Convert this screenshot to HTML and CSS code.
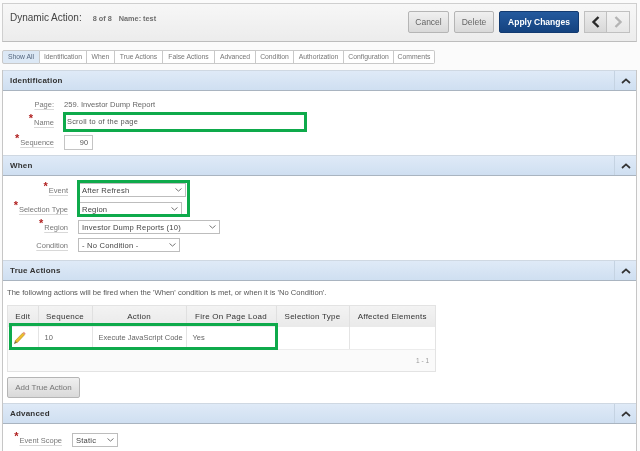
FILE: index.html
```html
<!DOCTYPE html>
<html lang="en">
<head>
<meta charset="utf-8">
<title>Dynamic Action</title>
<link rel="stylesheet" href="styles.css">
</head>
<body>
<div class="page">
  <header class="topbar">
    <div class="heading">
      <span class="title">Dynamic Action:</span>
      <span class="meta">8 of 8</span>
      <span class="meta">Name: test</span>
    </div>
    <div class="actions">
      <button class="btn">Cancel</button>
      <button class="btn btn-delete">Delete</button>
      <button class="btn btn-primary">Apply Changes</button>
      <div class="pager">
        <button class="pager-btn" aria-label="Previous"><svg width="10" height="12" viewBox="0 0 10 12"><path d="M7.500 1 2.500 6l5 5" fill="none" stroke="#2a2a2a" stroke-width="2.400"/></svg></button>
        <button class="pager-btn pager-next" aria-label="Next"><svg width="10" height="12" viewBox="0 0 10 12"><path d="M2.500 1l5 5-5 5" fill="none" stroke="#b4b4b4" stroke-width="2.400"/></svg></button>
      </div>
    </div>
  </header>

  <nav class="tabs">
    <span class="tab tab-active tw1">Show All</span>
    <span class="tab tw2">Identification</span>
    <span class="tab tw3">When</span>
    <span class="tab tw4">True Actions</span>
    <span class="tab tw5">False Actions</span>
    <span class="tab tw6">Advanced</span>
    <span class="tab tw7">Condition</span>
    <span class="tab tw8">Authorization</span>
    <span class="tab tw9">Configuration</span>
    <span class="tab tw10">Comments</span>
  </nav>

  <section class="panel">
    <div class="panel-head"><h2>Identification</h2><span class="collapse"><svg width="10" height="6" viewBox="0 0 10 6"><path d="M1 5l4-3.600L9 5" fill="none" stroke="#333" stroke-width="1.700"/></svg></span></div>
    <div class="form form-id">
      <div class="row row-page"><span class="label">Page:</span><span class="value">259. Investor Dump Report</span></div>
      <div class="row row-name"><span class="label req">Name</span><span class="field field-name">Scroll to of the page</span></div>
      <div class="row row-seq"><span class="label req">Sequence</span><span class="field field-seq">90</span></div>
    </div>
  </section>

  <section class="panel panel-when">
    <div class="panel-head"><h2>When</h2><span class="collapse"><svg width="10" height="6" viewBox="0 0 10 6"><path d="M1 5l4-3.600L9 5" fill="none" stroke="#333" stroke-width="1.700"/></svg></span></div>
    <div class="form form-when">
      <div class="highlight hl-when"></div>
      <div class="row row-sel"><span class="label req">Event</span><span class="select sel-event">After Refresh<svg class="chev" width="7" height="4" viewBox="0 0 7 4"><path d="M.5.5l3 2.600 3-2.600" fill="none" stroke="#777"/></svg></span></div>
      <div class="row row-sel"><span class="label req">Selection Type</span><span class="select sel-type">Region<svg class="chev" width="7" height="4" viewBox="0 0 7 4"><path d="M.5.5l3 2.600 3-2.600" fill="none" stroke="#777"/></svg></span></div>
      <div class="row row-sel"><span class="label req">Region</span><span class="select sel-region">Investor Dump Reports (10)<svg class="chev" width="7" height="4" viewBox="0 0 7 4"><path d="M.5.5l3 2.600 3-2.600" fill="none" stroke="#777"/></svg></span></div>
      <div class="row row-sel"><span class="label">Condition</span><span class="select sel-cond">- No Condition -<svg class="chev" width="7" height="4" viewBox="0 0 7 4"><path d="M.5.5l3 2.600 3-2.600" fill="none" stroke="#777"/></svg></span></div>
    </div>
  </section>

  <section class="panel panel-true">
    <div class="panel-head"><h2>True Actions</h2><span class="collapse"><svg width="10" height="6" viewBox="0 0 10 6"><path d="M1 5l4-3.600L9 5" fill="none" stroke="#333" stroke-width="1.700"/></svg></span></div>
    <div class="true-body">
      <p class="note">The following actions will be fired when the 'When' condition is met, or when it is 'No Condition'.</p>
      <div class="report">
        <div class="highlight hl-row"></div>
        <table>
          <colgroup><col class="c1"><col class="c2"><col class="c3"><col class="c4"><col class="c5"><col class="c6"></colgroup>
          <thead><tr><th>Edit</th><th>Sequence</th><th>Action</th><th>Fire On Page Load</th><th>Selection Type</th><th>Affected Elements</th></tr></thead>
          <tbody><tr>
            <td class="edit"><svg width="13" height="14" viewBox="0 0 14 15"><path d="M10.500 2l2 2-8 8.500-2.400-1.800z" fill="#eebd2c" stroke="#a98316" stroke-width=".6"/><path d="M10.500 2l1.200-1.200 2 2L12.500 4z" fill="#e88f7a"/><path d="M2.100 10.700l2.400 1.800-3.500 1.500z" fill="#7d6f38"/></svg></td>
            <td>10</td><td>Execute JavaScript Code</td><td>Yes</td><td></td><td></td>
          </tr></tbody>
        </table>
        <div class="pagination">1 - 1</div>
      </div>
      <button class="btn btn-add">Add True Action</button>
    </div>
  </section>

  <section class="panel panel-adv">
    <div class="panel-head"><h2>Advanced</h2><span class="collapse"><svg width="10" height="6" viewBox="0 0 10 6"><path d="M1 5l4-3.600L9 5" fill="none" stroke="#333" stroke-width="1.700"/></svg></span></div>
    <div class="form form-adv">
      <div class="row row-sel"><span class="label req">Event Scope</span><span class="select sel-scope">Static<svg class="chev" width="7" height="4" viewBox="0 0 7 4"><path d="M.5.5l3 2.600 3-2.600" fill="none" stroke="#777"/></svg></span></div>
    </div>
  </section>
</div>
</body>
</html>
```
FILE: styles.css
```css
* { box-sizing: border-box; }
html, body { margin: 0; padding: 0; height: 451px; overflow: hidden; background: #fff; }
body { font-family: "Liberation Sans", Arial, sans-serif; color: #555; font-size: 8px; }
.page { width: 640px; height: 451px; padding: 3px 2px 0; overflow: hidden; background: #fbfbfb; filter: blur(.45px); }

.topbar { width: 635px; height: 39px; display: flex; justify-content: space-between; background: linear-gradient(#f7f7f7, #ececec); border: 1px solid #cfcfcf; border-bottom-color: #bdbdbd; padding: 7px 6px 0 7px; }
.heading { display: flex; align-items: baseline; height: 22px; padding-top: 1px; }
.title { font-size: 10px; color: #444; margin-right: 11px; }
.meta { font-size: 7.300px; color: #555; margin-right: 7px; font-weight: bold; opacity: .85; }
.actions { display: flex; gap: 5px; }
.btn { font-family: inherit; height: 22px; border: 1px solid #b5b5b5; border-radius: 2px; background: linear-gradient(#f0f0f0, #d9d9d9); color: #666; font-size: 8.500px; padding: 0; width: 41px; }
.btn-delete { width: 40px; }
.btn-primary { width: 80px; background: linear-gradient(#245a9e, #14427f); border-color: #123a70; color: #fff; font-weight: bold; }
.pager { display: flex; }
.pager-btn { width: 23px; height: 22px; padding: 0; border: 1px solid #c0c0c0; background: linear-gradient(#ececec, #d8d8d8); display: flex; align-items: center; justify-content: center; }
.pager-next { border-left: 0; background: linear-gradient(#f3f3f3, #e6e6e6); }

.tabs { display: flex; margin-top: 8px; height: 14px; }
.tab { height: 14px; line-height: 12px; text-align: center; font-size: 6.800px; color: #777; background: #fff; border: 1px solid #c9c9c9; border-left: 0; }
.tab-active { background: #dce8f5; color: #55677f; border-left: 1px solid #c9c9c9; border-radius: 2px 0 0 2px; }
.tw1 { width: 38px; } .tw2 { width: 47px; } .tw3 { width: 28px; } .tw4 { width: 48px; } .tw5 { width: 52px; }
.tw6 { width: 41px; } .tw7 { width: 38px; } .tw8 { width: 50px; } .tw9 { width: 50px; } .tw10 { width: 41px; border-radius: 0 2px 2px 0; }

.panel { width: 635px; background: #fff; border-left: 1px solid #c6c6c6; border-right: 1px solid #c6c6c6; }
.panel-head { height: 21px; display: flex; justify-content: space-between; align-items: stretch; background: linear-gradient(#dfeaf7, #cfdff1); border-top: 1px solid #cfd8e2; border-bottom: 1px solid #a9b4c0; }
.panel-head h2 { margin: 0; padding-left: 7px; font-size: 8px; line-height: 19px; letter-spacing: .2px; color: #333; }
.collapse { width: 22px; border-left: 1px solid #c5d3e2; display: flex; align-items: center; justify-content: center; }
.tabs + .panel { margin-top: 6px; }

.form { position: relative; }
.form-id { height: 64px; padding-top: 6px; }
.form-when { height: 84px; padding-top: 5px; }
.form-adv { height: 28px; padding-top: 7px; }
.row { display: flex; align-items: center; }
.label { flex: none; text-align: right; font-size: 7.500px; color: #777; margin-right: 10px; text-decoration: underline #d8d8d8; text-underline-offset: 2px; }
.form-id .label { width: 51px; }
.form-when .label { width: 65px; }
.form-adv .label { width: 59px; }
.req::before { content: "*"; display: inline-block; color: #b02020; font-size: 11px; font-weight: bold; line-height: 8px; margin-right: 1px; position: relative; top: -3px; }
.value { font-size: 7.600px; color: #666; }
.row-page { height: 14px; }
.row-name { height: 20px; margin-top: 1px; }
.row-seq { height: 16px; margin-top: 2px; }
.field { display: block; font-size: 7.400px; color: #555; background: #fff; }
.field-name { width: 244px; height: 20px; line-height: 14px; border: 3px solid #0eaa4b; padding-left: 1px; letter-spacing: .25px; margin-left: -1px; }
.field-seq { width: 29px; height: 15px; line-height: 13px; border: 1px solid #c4c4c4; text-align: right; padding-right: 4px; }
.row-sel { height: 18.400px; }
.select { position: relative; display: block; height: 14px; line-height: 13px; border: 1px solid #bdbdbd; background: #fff; color: #444; font-size: 7.600px; padding-left: 3px; letter-spacing: .2px; }
.chev { position: absolute; right: 3px; top: 4px; }
.sel-event { width: 108px; }
.sel-type { width: 104px; }
.sel-region { width: 142px; }
.sel-cond { width: 102px; }
.sel-scope { width: 46px; }
.highlight { position: absolute; border: 3px solid #0eaa4b; z-index: 2; pointer-events: none; }
.hl-when { left: 74px; top: 4px; width: 113px; height: 37px; }

.true-body { height: 122px; padding: 7px 4px 0; }
.note { margin: 0; font-size: 7.600px; line-height: 10px; color: #555; }
.report { position: relative; width: 429px; margin-top: 7px; border: 1px solid #e3e3e3; background: #fafafa; height: 67px; }
table { border-collapse: collapse; table-layout: fixed; width: 427px; }
.c1 { width: 30px; } .c2 { width: 54px; } .c3 { width: 94px; } .c4 { width: 90px; } .c5 { width: 73px; } .c6 { width: 86px; }
th { height: 21px; padding: 0; background: linear-gradient(#f3f3f3, #e9e9e9); font-size: 8px; font-weight: normal; color: #333; letter-spacing: .25px; border-left: 1px solid #e0e0e0; }
th:first-child, td:first-child { border-left: 0; }
td { height: 22px; padding: 0 0 0 6px; background: #fff; font-size: 7.500px; color: #666; border-left: 1px solid #e4e4e4; border-bottom: 1px solid #ececec; }
td.edit { padding-left: 5px; }
td svg { display: block; }
.pagination { text-align: right; padding: 7px 6px 0 0; font-size: 6.500px; color: #999; }
.hl-row { left: 1px; top: 17px; width: 269px; height: 27px; }
.btn-add { display: block; width: 73px; height: 21px; margin-top: 5px; font-size: 8px; color: #777; }
```
